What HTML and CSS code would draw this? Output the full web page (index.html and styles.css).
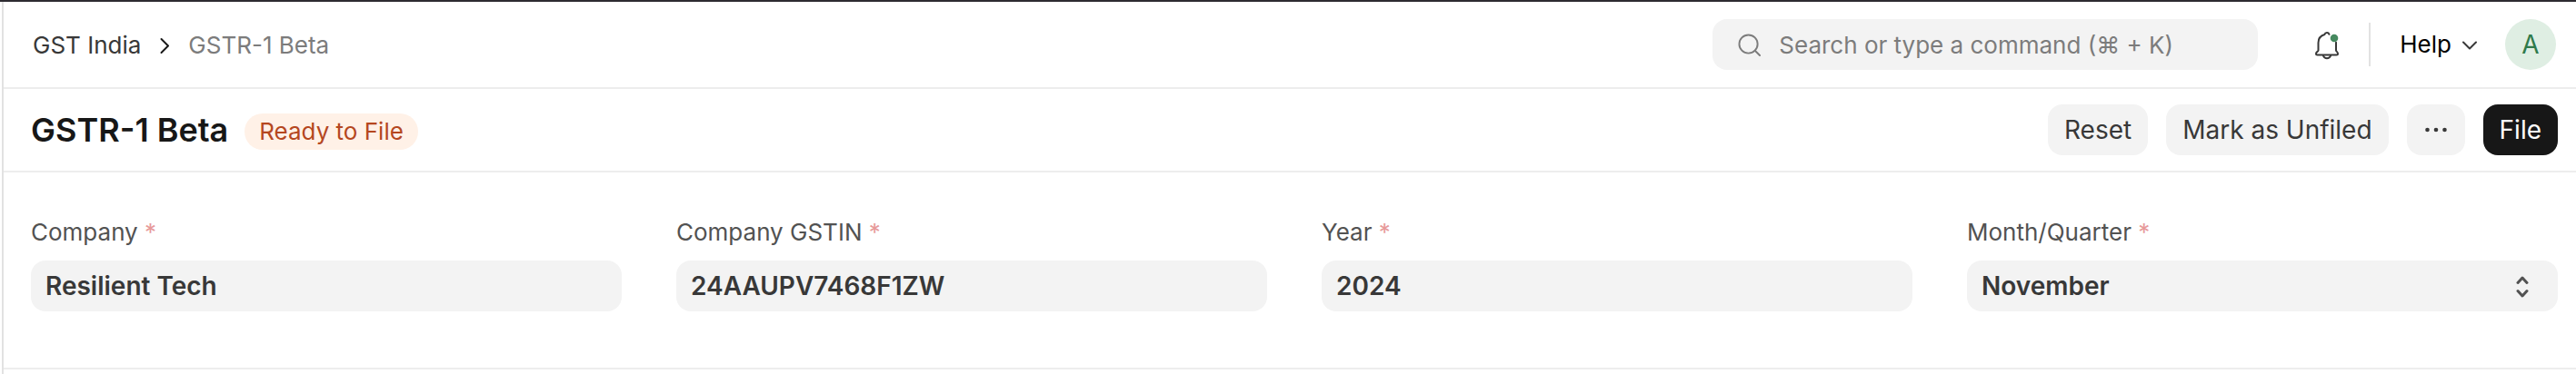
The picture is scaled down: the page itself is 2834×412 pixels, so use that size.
FILE: index.html
```html
<!DOCTYPE html>
<html lang="en">
<head>
<meta charset="utf-8">
<meta name="viewport" content="width=device-width, initial-scale=1">
<title>GSTR-1 Beta</title>
<link rel="stylesheet" href="styles.css">
</head>
<body>
<div class="app">
  <header class="navbar">
    <nav class="breadcrumbs" aria-label="Breadcrumb">
      <a class="crumb" href="#">GST India</a>
      <svg class="crumb-sep" viewBox="0 0 12 20" aria-hidden="true"><path d="M2.500 3 10 10.500 2.500 18"/></svg>
      <a class="crumb crumb-current" href="#" aria-current="page">GSTR-1 Beta</a>
    </nav>
    <div class="nav-tools">
      <label class="search">
        <svg class="search-icon" viewBox="0 0 26 26" aria-hidden="true"><circle cx="12" cy="12" r="10.500"/><path d="M19.500 19.500 25 25"/></svg>
        <input class="search-input" type="text" placeholder="Search or type a command (⌘ + K)" aria-label="Search or type a command">
      </label>
      <button class="bell" type="button" aria-label="Notifications">
        <svg class="bell-icon" viewBox="0 0 28 32" aria-hidden="true">
          <path d="M16.500 3.800C16 2.400 15.200 2 14 2s-2.200.6-2.600 2C7.400 5.200 4.500 8.600 4.500 13v8.500c0 1.200-2.500 1.700-2.500 3.500 0 1 .6 1.500 1.500 1.500h21c.9 0 1.500-.5 1.500-1.500 0-1.800-2-2.300-2-3.500v-8.700"/>
          <path d="M10 27.500c.6 1.600 2 2.700 4 2.700s3.400-1.100 4-2.700"/>
          <circle class="bell-dot" cx="22" cy="8" r="4.300"/>
        </svg>
      </button>
      <span class="divider"></span>
      <button class="help" type="button">Help
        <svg class="help-icon" viewBox="0 0 16 14" aria-hidden="true"><path d="M1 4.500 8 11.500 15 4.500"/></svg>
      </button>
      <button class="avatar" type="button" aria-label="Account">A</button>
    </div>
  </header>

  <section class="page-head">
    <div class="title-area">
      <h1 class="title">GSTR-1 Beta</h1>
      <span class="status">Ready to File</span>
    </div>
    <div class="actions">
      <button class="btn" type="button">Reset</button>
      <button class="btn" type="button">Mark as Unfiled</button>
      <button class="btn btn-menu" type="button" aria-label="Menu">
        <svg class="dots" viewBox="0 0 24 6" aria-hidden="true"><circle cx="2.500" cy="3" r="2.300"/><circle cx="12" cy="3" r="2.300"/><circle cx="21.500" cy="3" r="2.300"/></svg>
      </button>
      <button class="btn btn-primary" type="button">File</button>
    </div>
  </section>

  <form class="filters">
    <div class="field">
      <label class="label" for="company">Company <span class="required">*</span></label>
      <input class="control" id="company" type="text" value="Resilient Tech">
    </div>
    <div class="field">
      <label class="label" for="gstin">Company GSTIN <span class="required">*</span></label>
      <input class="control" id="gstin" type="text" value="24AAUPV7468F1ZW">
    </div>
    <div class="field">
      <label class="label" for="year">Year <span class="required">*</span></label>
      <input class="control" id="year" type="text" value="2024">
    </div>
    <div class="field">
      <label class="label" for="period">Month/Quarter <span class="required">*</span></label>
      <div class="select-wrap">
        <select class="control" id="period"><option>November</option></select>
        <svg class="select-icon" viewBox="0 0 14 26" aria-hidden="true"><path d="M2 8.500 7 3l5 5.500M2 17.500 7 23l5-5.500"/></svg>
      </div>
    </div>
  </form>
</div>
</body>
</html>
```
FILE: styles.css
```css
* { box-sizing: border-box; }

body {
  margin: 0;
  padding-left: 2px;
  background: #fff;
  border-top: 2px solid #2d2b31;
  font-family: Inter, "Liberation Sans", sans-serif;
  font-size: 26px;
  line-height: 32px;
  color: #383838;
}

button, input, select { font: inherit; color: inherit; border: 0; margin: 0; }
button { cursor: pointer; }
svg { display: block; flex: none; fill: none; stroke: currentColor; stroke-linecap: round; stroke-linejoin: round; }

.app { border-left: 2px solid #e2e2e2; min-height: calc(100vh - 2px); }

.navbar, .page-head {
  display: flex;
  align-items: center;
  justify-content: space-between;
  border-bottom: 2px solid #ededed;
}
.navbar { padding: 19px 22px 19px 32px; }

.breadcrumbs { display: flex; align-items: center; gap: 20px; padding-top: 2px; }
.crumb { color: #383838; text-decoration: none; }
.crumb-current { color: #7c7c7c; }
.crumb-sep { width: 12px; height: 20px; color: #171717; stroke-width: 2; }

.nav-tools { display: flex; align-items: center; }
.search {
  display: flex;
  align-items: center;
  gap: 20px;
  width: 600px;
  height: 56px;
  padding: 0 28px;
  border-radius: 16px;
  background: #f3f3f3;
  color: #7c7c7c;
}
.search-icon { width: 25px; height: 25px; stroke-width: 2; }
.search-input { flex: 1; min-width: 0; padding: 2px 0 0; background: none; outline: 0; }
.search-input::placeholder { color: #7c7c7c; opacity: 1; }

.bell { margin-left: 62px; padding: 2px 0 0; background: none; color: #383838; }
.bell-icon { width: 28px; height: 32px; stroke-width: 2; }
.bell-dot { fill: #46895f; stroke: none; }
.divider { width: 2px; height: 48px; margin: 0 32px; background: #e2e2e2; }
.help { display: flex; align-items: center; gap: 12px; padding: 0; background: none; color: #000; }
.help-icon { width: 16px; height: 14px; stroke-width: 2; color: #383838; }
.avatar {
  width: 56px;
  height: 56px;
  margin-left: 31px;
  padding: 0;
  border-radius: 50%;
  background: #dfeee3;
  color: #2f7a4b;
  font-size: 28px;
}

.page-head { padding: 17px 20px 17px 30px; }
.title-area { display: flex; align-items: center; gap: 18px; }
.title { margin: 0; font-size: 36px; line-height: 44px; font-weight: 600; color: #171717; }
.status {
  margin-top: 4px;
  padding: 4px 16px;
  border-radius: 20px;
  background: #fff1e7;
  color: #b5471f;
}
.actions { display: flex; gap: 20px; }
.btn {
  height: 56px;
  padding: 0 18px;
  border-radius: 16px;
  background: #f3f3f3;
  font-size: 28px;
}
.btn-menu { display: flex; align-items: center; padding: 0 20px; }
.dots { width: 24px; height: 6px; fill: currentColor; stroke: none; }
.btn-primary { background: #171717; color: #fff; }

.filters {
  display: grid;
  grid-template-columns: repeat(4, minmax(0, 1fr));
  gap: 60px;
  padding: 50px 20px 62px 30px;
  border-bottom: 2px solid #ededed;
}
.field { display: flex; flex-direction: column; gap: 15px; }
.label { color: #525252; }
.required { color: #e79a9a; }
.control {
  width: 100%;
  height: 56px;
  padding: 0 16px;
  border-radius: 16px;
  background: #f3f3f3;
  font-size: 28px;
  font-weight: 600;
  appearance: none;
}
.select-wrap { position: relative; }
.select-icon {
  position: absolute;
  right: 32px;
  top: 16px;
  width: 14px;
  height: 26px;
  color: #525252;
  stroke-width: 3;
  pointer-events: none;
}
```
